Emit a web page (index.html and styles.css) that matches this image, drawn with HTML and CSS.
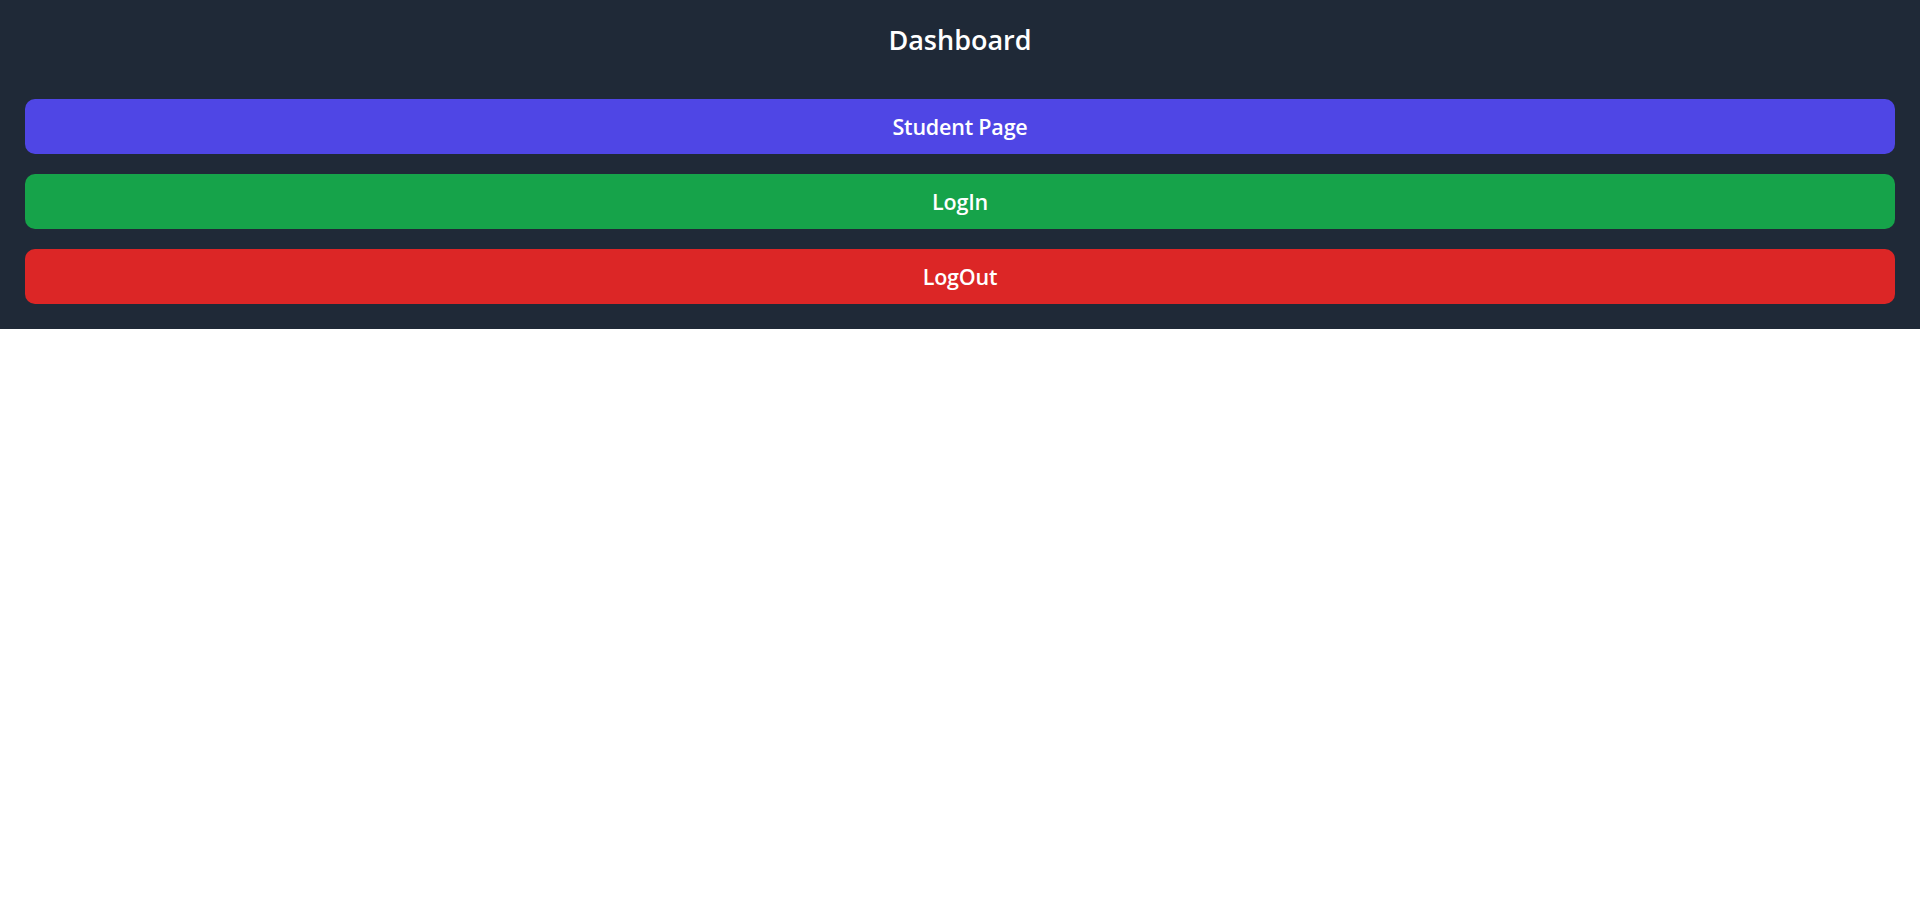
FILE: index.html
```html
<!DOCTYPE html>
<html lang="en">
<head>
<meta charset="utf-8">
<title>Dashboard</title>
<link rel="stylesheet" href="styles.css">
</head>
<body>
<header class="panel">
  <h1 class="title">Dashboard</h1>
  <nav class="actions">
    <button class="btn btn-indigo">Student Page</button>
    <button class="btn btn-green">LogIn</button>
    <button class="btn btn-red">LogOut</button>
  </nav>
</header>
</body>
</html>
```

FILE: styles.css
```css
html, body {
  margin: 0;
  padding: 0;
  background: #ffffff;
}
body {
  font-family: "Open Sans", "Noto Sans", sans-serif;
}
.panel {
  background: #1f2937;
  padding: 22px 25px 25px;
}
.title {
  margin: 0 0 41px;
  color: #ffffff;
  font-size: 27px;
  line-height: 36px;
  font-weight: 600;
  text-align: center;
}
.actions {
  display: flex;
  flex-direction: column;
  gap: 20px;
}
.btn {
  display: block;
  width: 100%;
  border: 0;
  border-radius: 10px;
  padding: 10px 0;
  color: #ffffff;
  font-family: inherit;
  font-size: 21.5px;
  letter-spacing: -0.2px;
  line-height: 35px;
  font-weight: 600;
  text-align: center;
  cursor: pointer;
}
.btn-indigo { background: #4f46e5; }
.btn-green { background: #16a34a; }
.btn-red { background: #dc2626; }
```
